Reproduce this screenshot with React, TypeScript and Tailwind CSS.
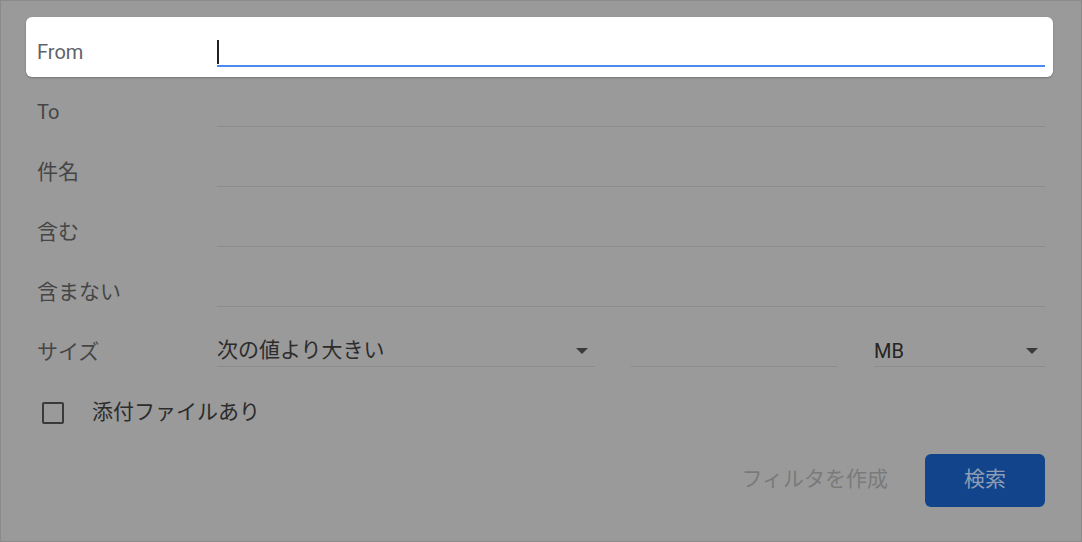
import React from 'react'

const font = { fontFamily: 'Roboto, "Noto Sans CJK JP", sans-serif' }

function Arrow() {
  return <span className="ml-auto mr-[7px] h-0 w-0 border-x-[6px] border-t-[6px] border-x-transparent border-t-[#3a3a3a]" />
}

function Row({ label, children, active }: { label: string; children?: React.ReactNode; active?: boolean }) {
  const ja = /[^\x00-\x7f]/.test(label)
  return (
    <div
      className={`flex h-[60px] items-center pt-[8px] pl-[11px] pr-[8px] ${
        active ? 'rounded-[6px] bg-white shadow-[0_1px_2px_rgba(0,0,0,0.25)]' : ''
      }`}
    >
      <div
        className={`w-[180px] pt-[2px] leading-6 ${ja ? 'text-[21px]' : 'text-[20px]'} ${
          active ? 'text-[#5f6368]' : 'text-[#464646]'
        }`}
      >
        {label}
      </div>
      {children ?? <div className="h-[32px] flex-1 border-b border-[#8c8c8c]" />}
    </div>
  )
}

export default function App() {
  return (
    <div className="h-[542px] w-[1082px] border border-[#8a8a8a] bg-[#9a9a9a] pt-[16px] pl-[25px] pr-[28px]" style={font}>
      {/* From は選択中 */}
      <Row label="From" active>
        <div className="flex h-[32px] flex-1 items-end border-b-2 border-[#4d8af0]">
          <span className="mb-[1px] h-[24px] w-[2px] bg-[#202124]" />
        </div>
      </Row>
      <Row label="To" />
      <Row label="件名" />
      <Row label="含む" />
      <Row label="含まない" />
      <Row label="サイズ">
        <div className="flex flex-1 items-center">
          <div className="flex h-[32px] w-[378px] items-center border-b border-[#8c8c8c] text-[21px] text-[#2c2c2c]">
            <span>次の値より大きい</span>
            <Arrow />
          </div>
          <div className="ml-[36px] h-[32px] w-[206px] border-b border-[#8c8c8c]" />
          <div className="ml-auto flex h-[32px] w-[171px] items-center border-b border-[#8c8c8c] text-[20px] text-[#242424]">
            <span>MB</span>
            <Arrow />
          </div>
        </div>
      </Row>

      {/* 添付ファイル */}
      <div className="mt-[20px] flex items-center pl-[16px]">
        <span className="h-[22px] w-[22px] rounded-[2px] border-2 border-[#3a3a3a]" />
        <span className="ml-[28px] text-[21px] text-[#2c2c2c]">添付ファイルあり</span>
      </div>

      <div className="mt-[25px] flex items-center justify-end pr-[8px]">
        <span className="text-[21px] text-[#7a7a7a]">フィルタを作成</span>
        <button className="ml-[37px] h-[53px] w-[120px] rounded-[6px] bg-[#11448a] text-[21px] text-[#8f9db3]">検索</button>
      </div>
    </div>
  )
}
